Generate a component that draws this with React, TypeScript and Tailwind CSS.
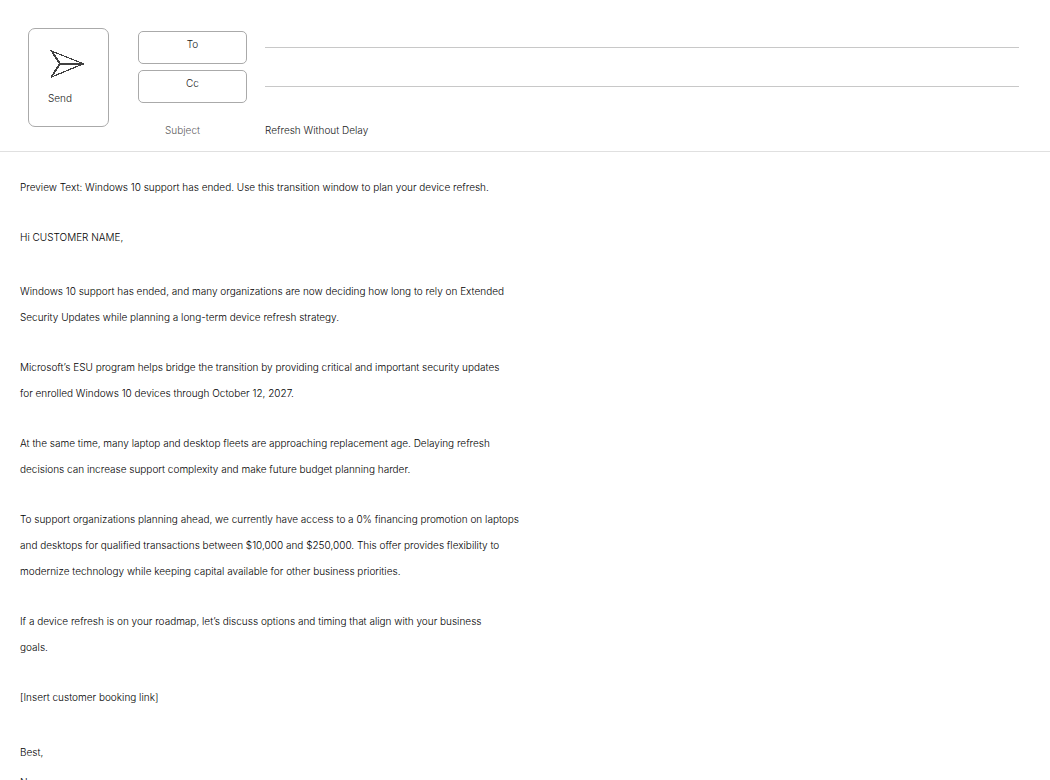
import React from "react";

const paragraphs: string[][] = [
  [
    "Windows 10 support has ended, and many organizations are now deciding how long to rely on Extended",
    "Security Updates while planning a long-term device refresh strategy.",
  ],
  [
    "Microsoft’s ESU program helps bridge the transition by providing critical and important security updates",
    "for enrolled Windows 10 devices through October 12, 2027.",
  ],
  [
    "At the same time, many laptop and desktop fleets are approaching replacement age. Delaying refresh",
    "decisions can increase support complexity and make future budget planning harder.",
  ],
  [
    "To support organizations planning ahead, we currently have access to a 0% financing promotion on laptops",
    "and desktops for qualified transactions between $10,000 and $250,000. This offer provides flexibility to",
    "modernize technology while keeping capital available for other business priorities.",
  ],
  [
    "If a device refresh is on your roadmap, let’s discuss options and timing that align with your business",
    "goals.",
  ],
  ["[Insert customer booking link]"],
];

function SendIcon() {
  return (
    <svg
      width="36"
      height="30"
      viewBox="0 0 36 30"
      fill="none"
      stroke="#404040"
      strokeWidth="1.2"
      shapeRendering="crispEdges"
      aria-hidden="true"
    >
      <path d="M3.5 2 L35.5 14.8 L3.5 28" />
      <path d="M12 15 H36" />
      <path d="M3 1 L12 14.8 L3 28.5" strokeWidth="1.8" />
    </svg>
  );
}

function RecipientRow({ label, id }: { label: string; id: string }) {
  return (
    <div className="flex items-start gap-[18px]">
      <button
        type="button"
        className="flex h-[33px] w-[109px] shrink-0 justify-center rounded-[5px] border border-[#aaaaaa] pt-1 leading-4"
      >
        {label}
      </button>
      <input
        id={id}
        aria-label={label}
        className="h-[17px] min-w-0 flex-1 border-b border-[#c8c8c8] bg-transparent outline-none"
      />
    </div>
  );
}

export default function App() {
  return (
    <div className="h-screen overflow-hidden bg-white font-['Inter',sans-serif] text-[10px] font-light text-black antialiased">
      <header className="flex items-start gap-[29px] border-b border-[#e0e0e0] pt-7 pr-[31px] pb-[13px] pl-7 text-[#202020]">
        <button
          type="button"
          className="flex h-[99px] w-[81px] shrink-0 flex-col rounded-[7px] border border-[#aaaaaa] pt-5 pl-[19px] text-left leading-4"
        >
          <SendIcon />
          <span className="pt-[11px]">Send</span>
        </button>
        <div className="flex min-w-0 flex-1 flex-col gap-[6px] pt-[3px]">
          <RecipientRow label="To" id="to" />
          <RecipientRow label="Cc" id="cc" />
          <div className="flex gap-[18px] pt-[13px] leading-4">
            <label htmlFor="subject" className="w-[109px] shrink-0 pr-[47px] text-right text-[#606060]">
              Subject
            </label>
            <input
              id="subject"
              defaultValue="Refresh Without Delay"
              className="h-4 min-w-0 flex-1 bg-transparent outline-none"
            />
          </div>
        </div>
      </header>
      <main className="px-5 pt-[22px] leading-[26px]">
        <p>Preview Text: Windows 10 support has ended. Use this transition window to plan your device refresh.</p>
        <p className="pt-6 pb-1">Hi CUSTOMER NAME,</p>
        {paragraphs.map((lines) => (
          <p key={lines[0]} className="pt-6">
            {lines.map((line) => (
              <span key={line} className="block">
                {line}
              </span>
            ))}
          </p>
        ))}
        <p className="pt-[27px] leading-[30px]">
          Best,
          <br />
          Name
        </p>
      </main>
    </div>
  );
}
